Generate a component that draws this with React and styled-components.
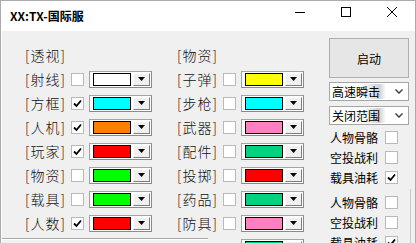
import React from "react";
import styled, { createGlobalStyle } from "styled-components";

const Global = createGlobalStyle`
  html, body { margin: 0; padding: 0; background: #ffffff; }
  body { width: 416px; height: 243px; overflow: hidden; font-family: "Noto Sans CJK SC", "Noto Sans", sans-serif; }
  * { box-sizing: border-box; }
`;

const Window = styled.div`
  width: 416px;
  height: 243px;
  border: 1px solid #ababab;
  border-bottom: none;
  display: flex;
  flex-direction: column;
  overflow: hidden;
  background: #fff;
`;

const TitleBar = styled.div`
  height: 30px;
  flex: none;
  display: flex;
  align-items: flex-start;
  background: #fff;
`;

const Title = styled.div`
  padding: 7px 0 0 9px;
  font-size: 12px;
  line-height: 16px;
  font-weight: 700;
  color: #000;
`;

const Caption = styled.div`
  margin-left: auto;
  display: flex;
`;

const CapBtn = styled.div`
  width: 46px;
  height: 30px;
  display: flex;
  justify-content: center;
  padding-top: 6px;
`;

const Body = styled.div`
  flex: 1;
  display: flex;
  background: #f0f0f0;
  border-left: 1px solid #fbfbfb;
  position: relative;
  overflow: hidden;
`;

const Main = styled.div`
  width: 302px;
  flex: none;
  display: flex;
  flex-direction: column;
`;

const Columns = styled.div`
  height: 207px;
  flex: none;
  display: flex;
  gap: 25px;
  padding: 12px 0 0 23px;
`;

const Rule = styled.div`
  width: 207px;
  height: 2px;
  flex: none;
  border-top: 1px solid #a9a9a9;
  border-bottom: 1px solid #ffffff;
  margin-left: -1px;
`;

const Column = styled.div`
  width: 127px;
  display: flex;
  flex-direction: column;
`;

const Row = styled.div`
  height: 24px;
  flex: none;
  display: flex;
  align-items: center;
`;

const Label = styled.span`
  width: 46px;
  flex: none;
  font-size: 14px;
  font-weight: 300;
  letter-spacing: 1px;
  color: #111;
  white-space: nowrap;
`;

const Box = styled.span`
  width: 13px;
  height: 13px;
  flex: none;
  background: #fff;
  border: 1px solid #b9b9b9;
  display: flex;
  align-items: center;
  justify-content: center;
  visibility: ${(p) => (p.$hidden ? "hidden" : "visible")};
`;

const Combo = styled.div`
  width: 63px;
  height: 17px;
  margin-left: 5px;
  flex: none;
  display: flex;
  border: 1px solid #a3a3a3;
  border-right-color: #8a8a8a;
  border-bottom-color: #8a8a8a;
  background: #fff;
  padding: 1px;
`;

const SwatchWrap = styled.div`
  flex: 1;
  padding: 0 2px 0 2px;
  display: flex;
`;

const Swatch = styled.div`
  flex: 1;
  border: 1px solid #000;
  background: ${(p) => p.$c};
`;

const Arrow = styled.div`
  width: 17px;
  flex: none;
  background: #f0f0f0;
  border-top: 1px solid #fff;
  border-left: 1px solid #fff;
  border-right: 1px solid #7d7d7d;
  border-bottom: 1px solid #7d7d7d;
  display: flex;
  align-items: center;
  justify-content: center;
`;

const Side = styled.div`
  width: 80px;
  margin-left: 25px;
  flex: none;
  display: flex;
  flex-direction: column;
  padding-top: 7px;
`;

const StartButton = styled.div`
  height: 40px;
  flex: none;
  background: #e6e6e6;
  border: 1px solid #adadad;
  display: flex;
  align-items: center;
  justify-content: center;
  font-size: 12px;
  color: #000;
  margin-bottom: 4px;
`;

const Select = styled.div`
  height: 19px;
  flex: none;
  background: #fff;
  border: 1px solid #a5a5a5;
  display: flex;
  align-items: center;
  padding: 0 5px 0 2px;
  margin-bottom: 5px;
  font-size: 12px;
  color: #000;
`;

const SelText = styled.span`
  padding-right: 6px;
  background: linear-gradient(90deg, rgba(0,0,0,0) 0%, rgba(0,0,0,0) 55%, #d2d2d2 88%, rgba(0,0,0,0) 100%);
  line-height: 15px;
`;

const Chevron = styled.svg`
  margin-left: auto;
`;

const Group = styled.div`
  display: flex;
  flex-direction: column;
  position: relative;
  margin-top: ${(p) => p.$top}px;
  &::after {
    content: "";
    display: ${(p) => (p.$edge ? "block" : "none")};
    position: absolute;
    right: -2px;
    top: -3px;
    width: 1px;
    height: 80px;
    background: #c9c9c9;
  }
`;

const Sep = styled.div`
  height: 1px;
  margin: 0 -10px 0 28px;
  background: #fdfdfd;
`;

const SideRow = styled.div`
  height: 20px;
  flex: none;
  display: flex;
  align-items: center;
`;

const SideText = styled.span`
  width: 56px;
  padding-left: 1px;
  font-size: 12px;
  color: #000;
  white-space: nowrap;
`;

const Check = ({ on, hidden }) => (
  <Box $hidden={hidden}>
    {on && (
      <svg width="11" height="11" viewBox="0 0 11 11">
        <polyline points="2,5.5 4.5,8 9,2.5" fill="none" stroke="#000" strokeWidth="1.8" />
      </svg>
    )}
  </Box>
);

const ColorCombo = ({ c }) => (
  <Combo>
    <SwatchWrap>
      <Swatch $c={c} />
    </SwatchWrap>
    <Arrow>
      <svg width="7" height="4" viewBox="0 0 7 4">
        <polygon points="0,0 7,0 3.5,4" fill="#000" />
      </svg>
    </Arrow>
  </Combo>
);

const GREEN = "#00d27f";
const col1 = [
  ["[射线]", false, "#ffffff"],
  ["[方框]", true, "#00ffff"],
  ["[人机]", true, "#ff8000"],
  ["[玩家]", true, "#ff0000"],
  ["[物资]", false, "#00ff00"],
  ["[载具]", false, "#00ff00"],
  ["[人数]", true, "#ff0000"],
];
const col2 = [
  ["[子弹]", false, "#ffff00"],
  ["[步枪]", false, "#00ffff"],
  ["[武器]", false, "#ff80c0"],
  ["[配件]", false, GREEN],
  ["[投掷]", false, "#ff0000"],
  ["[药品]", false, GREEN],
  ["[防具]", false, "#ff80c0"],
  ["", false, GREEN],
];

const sideItems = [
  ["人物骨骼", false],
  ["空投战利", false],
  ["载具油耗", true],
];

const ColumnBlock = ({ head, rows }) => (
  <Column>
    <Row>
      <Label>{head}</Label>
    </Row>
    {rows.map(([t, on, c], i) => (
      <Row key={i}>
        <Label>{t}</Label>
        <Check on={on} hidden={!t} />
        <ColorCombo c={c} />
      </Row>
    ))}
  </Column>
);

const ChevronIcon = () => (
  <Chevron width="8" height="5" viewBox="0 0 8 5">
    <polyline points="0.5,0.5 4,4 7.5,0.5" fill="none" stroke="#3c3c3c" strokeWidth="1.4" />
  </Chevron>
);

export default function App() {
  return (
    <>
      <Global />
      <Window>
        <TitleBar>
          <Title>XX:TX-国际服</Title>
          <Caption>
            <CapBtn>
              <svg width="10" height="10" viewBox="0 0 10 10">
                <line x1="0" y1="5.5" x2="10" y2="5.5" stroke="#000" strokeWidth="1" />
              </svg>
            </CapBtn>
            <CapBtn>
              <svg width="10" height="10" viewBox="0 0 10 10">
                <rect x="0.5" y="0.5" width="9" height="9" fill="none" stroke="#000" strokeWidth="1" />
              </svg>
            </CapBtn>
            <CapBtn>
              <svg width="10" height="10" viewBox="0 0 10 10">
                <line x1="0" y1="0" x2="10" y2="10" stroke="#000" strokeWidth="1" />
                <line x1="10" y1="0" x2="0" y2="10" stroke="#000" strokeWidth="1" />
              </svg>
            </CapBtn>
          </Caption>
        </TitleBar>
        <Body>
          <Main>
            <Columns>
              <ColumnBlock head="[透视]" rows={col1} />
              <ColumnBlock head="[物资]" rows={col2} />
            </Columns>
            <Rule />
          </Main>
          <Side>
            <StartButton>启动</StartButton>
            <Select>
              <SelText>高速瞬击</SelText>
              <ChevronIcon />
            </Select>
            <Select>
              <SelText>关闭范围</SelText>
              <ChevronIcon />
            </Select>
            <Group $top={-3}>
              {sideItems.map(([t, on], i) => (
                <SideRow key={i}>
                  <SideText>{t}</SideText>
                  <Check on={on} />
                </SideRow>
              ))}
            </Group>
            <Sep />
            <Group $top={5} $edge>
              {sideItems.map(([t, on], i) => (
                <SideRow key={i}>
                  <SideText>{t}</SideText>
                  <Check on={on} />
                </SideRow>
              ))}
            </Group>
          </Side>
        </Body>
      </Window>
    </>
  );
}
